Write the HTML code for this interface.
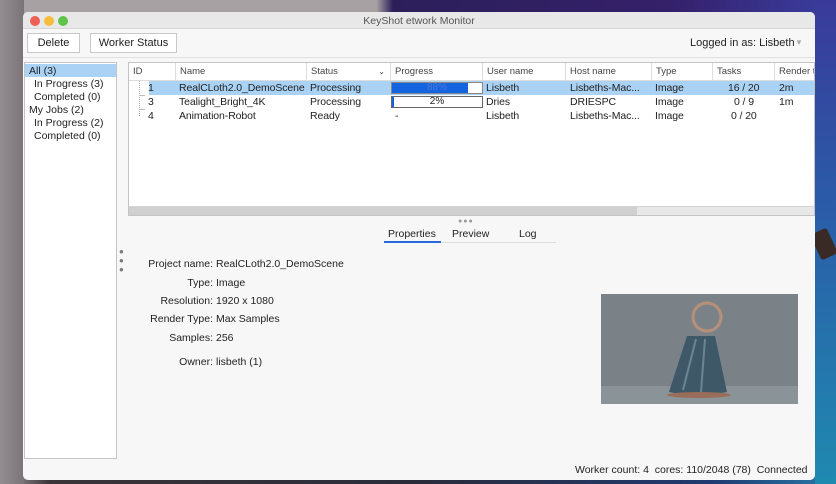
<!DOCTYPE html>
<html><head><meta charset="utf-8"><style>
*{margin:0;padding:0;box-sizing:border-box}
body{width:836px;height:484px;overflow:hidden;position:relative;font-family:"Liberation Sans",Arial,sans-serif;font-size:10.5px;color:#222;
background:linear-gradient(90deg,#9a9396 0%,#6f6a6e 3%,#3a3438 6%,#2a2c3a 50%,#203a70 85%,#2a7aa8 100%)}
.bgtop{position:absolute;left:0;top:0;width:836px;height:20px;background:linear-gradient(90deg,#a7a1a3 0%,#a7a1a3 45%,#2b1f5a 47%,#35206a 80%,#3a3fa0 100%)}
.bgl{position:absolute;left:0;top:0;width:24px;height:484px;background:linear-gradient(90deg,#948d90,#7a7478)}
.bgr{position:absolute;left:815px;top:0;width:21px;height:484px;background:linear-gradient(180deg,#3a3a9a 0%,#2b5aa8 40%,#1f8ab0 100%)}
.win{position:absolute;left:23px;top:12px;width:792px;height:468px;background:#f7f7f7;border-radius:5px;overflow:hidden}
.title{position:absolute;left:0;top:0;width:792px;height:17px;background:#e9e8e9;text-align:center;font-size:10.5px;color:#555;line-height:18px;border-bottom:1px solid #d6d6d6}
.dot{position:absolute;top:4px;width:10px;height:10px;border-radius:50%}
.a{position:absolute;white-space:nowrap}
.r{font-size:10.5px;letter-spacing:-0.1px}
.btn{position:absolute;top:33px;height:20px;background:#fff;border:1px solid #c8c8c8;line-height:18px;text-align:center;font-size:11px}
.list{position:absolute;left:24px;top:62px;width:93px;height:397px;background:#fff;border:1px solid #c4c4c4}
.table{position:absolute;left:128px;top:62px;width:687px;height:154px;background:#fff;border:1px solid #c4c4c4;overflow:hidden}
.hd{position:absolute;top:0;height:18px;border-right:1px solid #ddd;border-bottom:1px solid #ddd;font-size:9.5px;color:#444;line-height:18px;padding-left:4px}
.sel{position:absolute;left:20px;top:18px;width:668px;height:14px;background:#a9d2f5}
.lb{position:absolute;width:90px;left:123px;text-align:right;font-size:10.5px}
.v{position:absolute;left:216px;font-size:10.5px}
</style></head><body>
<div class="bgtop"></div><div class="bgl"></div><div class="bgr"></div>
<div class="a" style="left:815px;top:230px;width:18px;height:28px;background:#3a2a26;transform:rotate(-25deg);border-radius:3px"></div>
<div class="win">
<div class="title">KeyShot etwork Monitor</div>
<div class="dot" style="left:7px;background:#ed5f57"></div>
<div class="dot" style="left:21px;background:#f4be3a"></div>
<div class="dot" style="left:35px;background:#5ec448"></div>
</div>
<div class="a" style="left:23px;top:29px;width:792px;height:29px;border-bottom:1px solid #e0e0e0"></div>
<div class="btn" style="left:27px;width:53px">Delete</div>
<div class="btn" style="left:90px;width:87px">Worker Status</div>
<div class="a" style="left:690px;top:37px;font-size:11px">Logged in as: Lisbeth</div>
<div class="a" style="left:795px;top:38px;font-size:8px;color:#aaa">▼</div>

<div class="list">
<div class="a" style="left:0;top:1px;width:91px;height:13px;background:#a9d2f5"></div>
<div class="a" style="left:4px;top:2px">All (3)</div>
<div class="a" style="left:9px;top:15px">In Progress (3)</div>
<div class="a" style="left:9px;top:28px">Completed (0)</div>
<div class="a" style="left:4px;top:41px">My Jobs (2)</div>
<div class="a" style="left:9px;top:54px">In Progress (2)</div>
<div class="a" style="left:9px;top:67px">Completed (0)</div>
</div>

<div class="table">
<div class="hd" style="left:0;width:47px">ID</div>
<div class="hd" style="left:47px;width:131px">Name</div>
<div class="hd" style="left:178px;width:84px">Status<span style="position:absolute;right:5px;font-size:8px">⌄</span></div>
<div class="hd" style="left:262px;width:92px">Progress</div>
<div class="hd" style="left:354px;width:83px">User name</div>
<div class="hd" style="left:437px;width:86px">Host name</div>
<div class="hd" style="left:523px;width:61px">Type</div>
<div class="hd" style="left:584px;width:62px">Tasks</div>
<div class="hd" style="left:646px;width:42px;border-right:none">Render t</div>
<div class="sel"></div>
<div class="a" style="left:10px;top:18px;width:1px;height:35px;border-left:1px dotted #aaa"></div>
<div class="a" style="left:10px;top:32px;width:6px;border-top:1px solid #bbb"></div>
<div class="a" style="left:10px;top:46px;width:6px;border-top:1px solid #bbb"></div>
<div class="a r" style="left:19px;top:19px">1</div>
<div class="a r" style="left:19px;top:33px">3</div>
<div class="a r" style="left:19px;top:47px">4</div>
<div class="a r" style="left:50px;top:19px">RealCLoth2.0_DemoScene</div>
<div class="a r" style="left:50px;top:33px">Tealight_Bright_4K</div>
<div class="a r" style="left:50px;top:47px">Animation-Robot</div>
<div class="a r" style="left:181px;top:19px">Processing</div>
<div class="a r" style="left:181px;top:33px">Processing</div>
<div class="a r" style="left:181px;top:47px">Ready</div>
<div class="a" style="left:262px;top:19px;width:92px;height:12px;background:#fff;border:1px solid #888"></div>
<div class="a" style="left:263px;top:20px;width:76px;height:10px;background:#1464e0;color:#4a7ad8;font-size:10px;line-height:10px;text-align:center;padding-left:14px">88%</div>
<div class="a" style="left:262px;top:33px;width:92px;height:12px;background:#fff;border:1px solid #666;font-size:10px;line-height:10px;text-align:center">2%</div>
<div class="a" style="left:263px;top:34px;width:2px;height:10px;background:#1464e0"></div>
<div class="a" style="left:266px;top:47px">-</div>
<div class="a r" style="left:357px;top:19px">Lisbeth</div>
<div class="a r" style="left:357px;top:33px">Dries</div>
<div class="a r" style="left:357px;top:47px">Lisbeth</div>
<div class="a r" style="left:441px;top:19px">Lisbeths-Mac...</div>
<div class="a r" style="left:441px;top:33px">DRIESPC</div>
<div class="a r" style="left:441px;top:47px">Lisbeths-Mac...</div>
<div class="a r" style="left:526px;top:19px">Image</div>
<div class="a r" style="left:526px;top:33px">Image</div>
<div class="a r" style="left:526px;top:47px">Image</div>
<div class="a r" style="left:599px;top:19px">16 / 20</div>
<div class="a r" style="left:605px;top:33px">0 / 9</div>
<div class="a r" style="left:602px;top:47px">0 / 20</div>
<div class="a r" style="left:650px;top:19px">2m</div>
<div class="a r" style="left:650px;top:33px">1m</div>
<div class="a" style="left:0;top:143px;width:686px;height:10px;background:#e8e8e8;border-top:1px solid #d4d4d4"></div>
<div class="a" style="left:0;top:144px;width:508px;height:8px;background:#d0d0d0"></div>
</div>

<div class="a" style="left:458px;top:218px;font-size:7px;color:#999;letter-spacing:1px">●●●</div>
<div class="a" style="left:119px;top:247px;font-size:8px;color:#777;line-height:9px;width:8px">●<br>●<br>●</div>
<div class="a" style="left:388px;top:228px;font-size:10.5px">Properties</div>
<div class="a" style="left:452px;top:228px;font-size:10.5px">Preview</div>
<div class="a" style="left:519px;top:228px;font-size:10.5px">Log</div>
<div class="a" style="left:441px;top:242px;width:115px;height:1px;background:#ddd"></div>
<div class="a" style="left:384px;top:241px;width:57px;height:2px;background:#2a6ad8"></div>

<div class="lb" style="top:258px">Project name:</div>
<div class="lb" style="top:277px">Type:</div>
<div class="lb" style="top:295px">Resolution:</div>
<div class="lb" style="top:313px">Render Type:</div>
<div class="lb" style="top:332px">Samples:</div>
<div class="lb" style="top:356px">Owner:</div>
<div class="v" style="top:258px">RealCLoth2.0_DemoScene</div>
<div class="v" style="top:277px">Image</div>
<div class="v" style="top:295px">1920 x 1080</div>
<div class="v" style="top:313px">Max Samples</div>
<div class="v" style="top:332px">256</div>
<div class="v" style="top:356px">lisbeth (1)</div>

<svg class="a" style="left:601px;top:294px" width="197" height="110" viewBox="0 0 197 110">
<rect width="197" height="110" fill="#7a8288"/>
<rect y="92" width="197" height="18" fill="#8a9498"/>
<path d="M100 42 L86 42 L68 98 Q96 104 126 98 L114 42 Z" fill="#3e5868"/>
<path d="M95 45 L82 96 M104 45 L100 98" stroke="#6a8696" stroke-width="2"/>
<circle cx="106" cy="23" r="14" fill="none" stroke="#b8907a" stroke-width="3"/>
<ellipse cx="98" cy="101" rx="32" ry="3" fill="#9a6c5a"/>
</svg>

<div class="a" style="left:575px;top:464px;font-size:10.5px">Worker count: 4&nbsp; cores: 110/2048 (78)&nbsp; Connected</div>
</body></html>
